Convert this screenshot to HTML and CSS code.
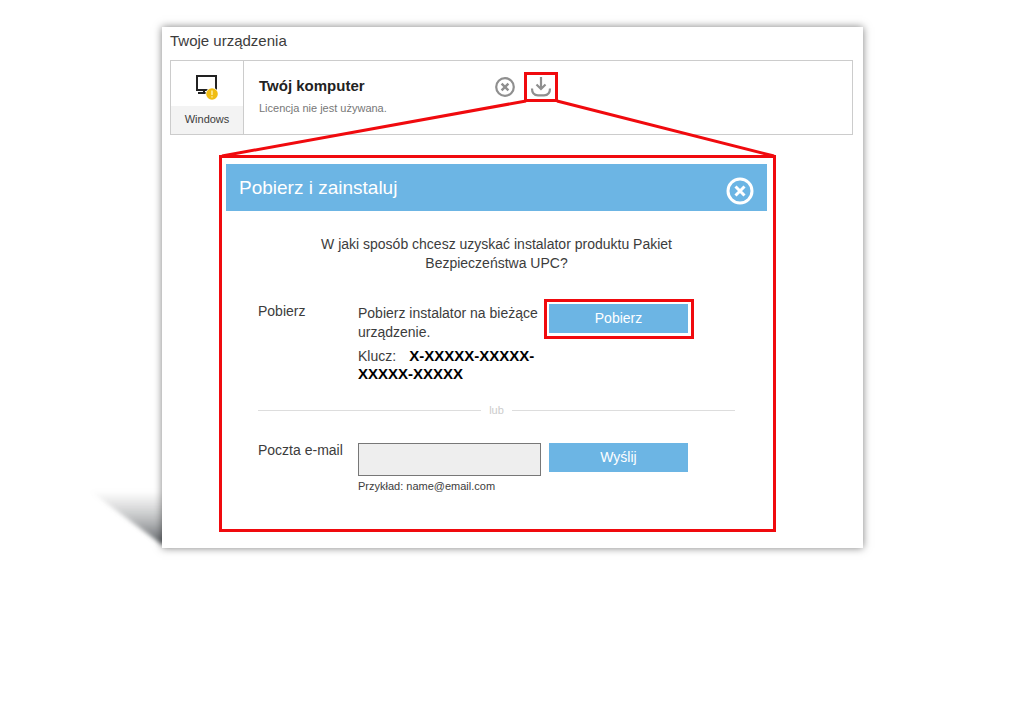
FILE: index.html
```html
<!DOCTYPE html>
<html lang="pl">
<head>
<meta charset="utf-8">
<title>Twoje urządzenia</title>
<link rel="stylesheet" href="styles.css">
</head>
<body>
<main class="sheet">
  <svg class="cast" viewBox="0 0 90 80" aria-hidden="true">
    <defs>
      <linearGradient id="cast-fill" x1="0" y1="0" x2="0" y2="1">
        <stop offset="0" stop-color="#999" stop-opacity="0"/>
        <stop offset="0.5" stop-color="#85888b" stop-opacity="0.5"/>
        <stop offset="1" stop-color="#606468" stop-opacity="1"/>
      </linearGradient>
      <filter id="cast-blur" x="-20%" y="-20%" width="140%" height="140%"><feGaussianBlur stdDeviation="2"/></filter>
    </defs>
    <path d="M8 23H90V76L79 76Z" fill="url(#cast-fill)" filter="url(#cast-blur)"/>
  </svg>
  <div class="page">
    <h1 class="page-title">Twoje urządzenia</h1>
    <section class="device">
      <div class="platform">
        <div class="platform-icon">
          <svg width="24" height="28" viewBox="0 0 24 28" aria-hidden="true">
            <path d="M2 3H21V17H2Z" fill="none" stroke="#222" stroke-width="2"/>
            <path d="M9 17V20M3 20H11" fill="none" stroke="#222" stroke-width="2"/>
            <circle cx="17" cy="21" r="6.500" fill="#fff"/>
            <circle cx="17" cy="21" r="5.800" fill="#f0bd13"/>
            <path d="M17 17.500V22M17 23.200V24.500" stroke="#fff2b0" stroke-width="1.400"/>
          </svg>
        </div>
        <div class="platform-name">Windows</div>
      </div>
      <div class="device-info">
        <h2 class="device-name">Twój komputer</h2>
        <p class="device-status">Licencja nie jest używana.</p>
      </div>
      <div class="device-actions">
        <button class="icon-button" type="button" aria-label="Usuń">
          <svg width="20" height="20" viewBox="0 0 20 20" aria-hidden="true">
            <circle cx="10" cy="10" r="8.800" fill="none" stroke="#8f8f8f" stroke-width="2.200"/>
            <path d="M6.600 6.600L13.400 13.400M13.400 6.600L6.600 13.400" stroke="#8f8f8f" stroke-width="2.400"/>
          </svg>
        </button>
        <button class="icon-button marked" type="button" aria-label="Pobierz">
          <svg width="22" height="20" viewBox="0 0 22 20" aria-hidden="true">
            <path d="M11 0V12M6.500 7.500L11 12L15.500 7.500M2 11.500C2 16 4 18.300 8 18.300H14C18 18.300 20 16 20 11.500" fill="none" stroke="#8f8f8f" stroke-width="2.200"/>
          </svg>
        </button>
      </div>
    </section>
    <section class="callout" role="dialog" aria-labelledby="dialog-title">
      <svg class="rays" viewBox="0 0 557 55" preserveAspectRatio="none" aria-hidden="true">
        <path d="M307 -2L3 53M338 -2L555 53" fill="none" stroke="#f00a0e" stroke-width="3"/>
      </svg>
      <header class="dialog-header">
        <h2 class="dialog-title" id="dialog-title">Pobierz i zainstaluj</h2>
        <button class="icon-button" type="button" aria-label="Zamknij">
          <svg width="28" height="28" viewBox="0 0 28 28" aria-hidden="true">
            <circle cx="14" cy="14" r="12" fill="none" stroke="#fff" stroke-width="3"/>
            <path d="M9.500 9.500L18.500 18.500M18.500 9.500L9.500 18.500" stroke="#fff" stroke-width="3"/>
          </svg>
        </button>
      </header>
      <div class="dialog-body">
        <p class="question">W jaki sposób chcesz uzyskać instalator produktu Pakiet Bezpieczeństwa UPC?</p>
        <div class="row">
          <h3 class="row-label">Pobierz</h3>
          <div class="row-content">
            <p class="hint">Pobierz instalator na bieżące urządzenie.</p>
            <p class="key"><span class="key-label">Klucz:</span><strong>X-XXXXX-XXXXX-</strong><wbr><strong>XXXXX-XXXXX</strong></p>
          </div>
          <div class="marked-action"><button class="action" type="button">Pobierz</button></div>
        </div>
        <div class="divider">lub</div>
        <form class="row">
          <label class="row-label" for="email">Poczta e-mail</label>
          <div class="row-content">
            <input class="email" id="email" type="email">
            <p class="example">Przykład: name@email.com</p>
          </div>
          <button class="action" type="button">Wyślij</button>
        </form>
      </div>
    </section>
  </div>
</main>
</body>
</html>
```
FILE: styles.css
```css
* { box-sizing: border-box; }
body {
  margin: 0;
  padding: 27px 161px 40px 162px;
  background: #fff;
  color: #3c3c3c;
  font: 14px/19px "Liberation Sans", Arial, sans-serif;
}
h1, h2, h3, p { margin: 0; font-weight: normal; }
button { border: 0; padding: 0; font: inherit; cursor: pointer; }
svg { display: block; }

.sheet { position: relative; }
.page {
  position: relative;
  padding: 4px 10px 16px 8px;
  background: #fff;
  box-shadow: 0 0 8px rgba(0, 0, 0, 0.5);
}
.cast { position: absolute; right: 100%; bottom: 0; width: 90px; height: 80px; margin-right: -10px; overflow: visible; }
.page-title { font-size: 15px; line-height: 20px; }

.device { display: flex; height: 75px; margin-top: 9px; border: 1px solid #ccc; }
.platform { display: flex; flex-direction: column; width: 73px; border-right: 1px solid #ccc; }
.platform-icon { display: flex; flex: 1; justify-content: center; padding-top: 12px; }
.platform-name { height: 28px; background: #f3f3f3; font-size: 11px; line-height: 27px; text-align: center; }
.device-info { width: 251px; padding: 15px 0 0 15px; }
.device-name { color: #222; font-size: 15px; font-weight: bold; line-height: 20px; }
.device-status { color: #777; font-size: 11px; line-height: 24px; }
.device-actions { display: flex; align-items: flex-start; gap: 9px; padding-top: 11px; }
.icon-button { display: flex; align-items: center; height: 30px; background: none; }
.marked { justify-content: center; width: 34px; border: 3px solid #f00a0e; }

.callout { position: relative; margin: 20px 77px 0 49px; padding: 6px 6px 30px 4px; border: 3px solid #f00a0e; }
.rays { position: absolute; bottom: 100%; left: -3px; width: calc(100% + 6px); height: 55px; overflow: visible; }
.dialog-header { display: flex; align-items: center; justify-content: space-between; height: 47px; padding: 0 13px; background: #6cb5e4; color: #fff; }
.dialog-header .icon-button { padding-top: 6px; }
.dialog-title { font-size: 19px; line-height: 24px; }
.dialog-body { padding: 24px 32px 0; }
.question { max-width: 400px; margin: 0 auto 31px; text-align: center; }
.row { display: flex; align-items: flex-start; }
.row-label { width: 100px; padding-top: 4px; font-size: 14px; }
.row .row-label { margin-top: -6px; }
.row-content { width: 183px; margin-right: 8px; }
.key { margin-top: 5px; line-height: 18px; }
.key-label { margin-right: 13px; }
.key strong { color: #000; font-size: 15px; }
.action { width: 139px; height: 29px; background: #6cb5e4; color: #fff; }
.marked-action { margin: -5px -5px 0; padding: 2px 3px 3px 2px; border: 3px solid #f00a0e; }
.marked-action .action { display: block; }
.divider { display: flex; align-items: center; gap: 8px; margin: 18px 0 23px; color: #ccc; font-size: 11px; }
.divider::before, .divider::after { content: ""; flex: 1; height: 1px; background: #ddd; }
.email { display: block; width: 100%; height: 33px; border: 1px solid #777; background: #eee; font: inherit; }
.example { font-size: 11px; line-height: 20px; margin-bottom: 3px; }
```
